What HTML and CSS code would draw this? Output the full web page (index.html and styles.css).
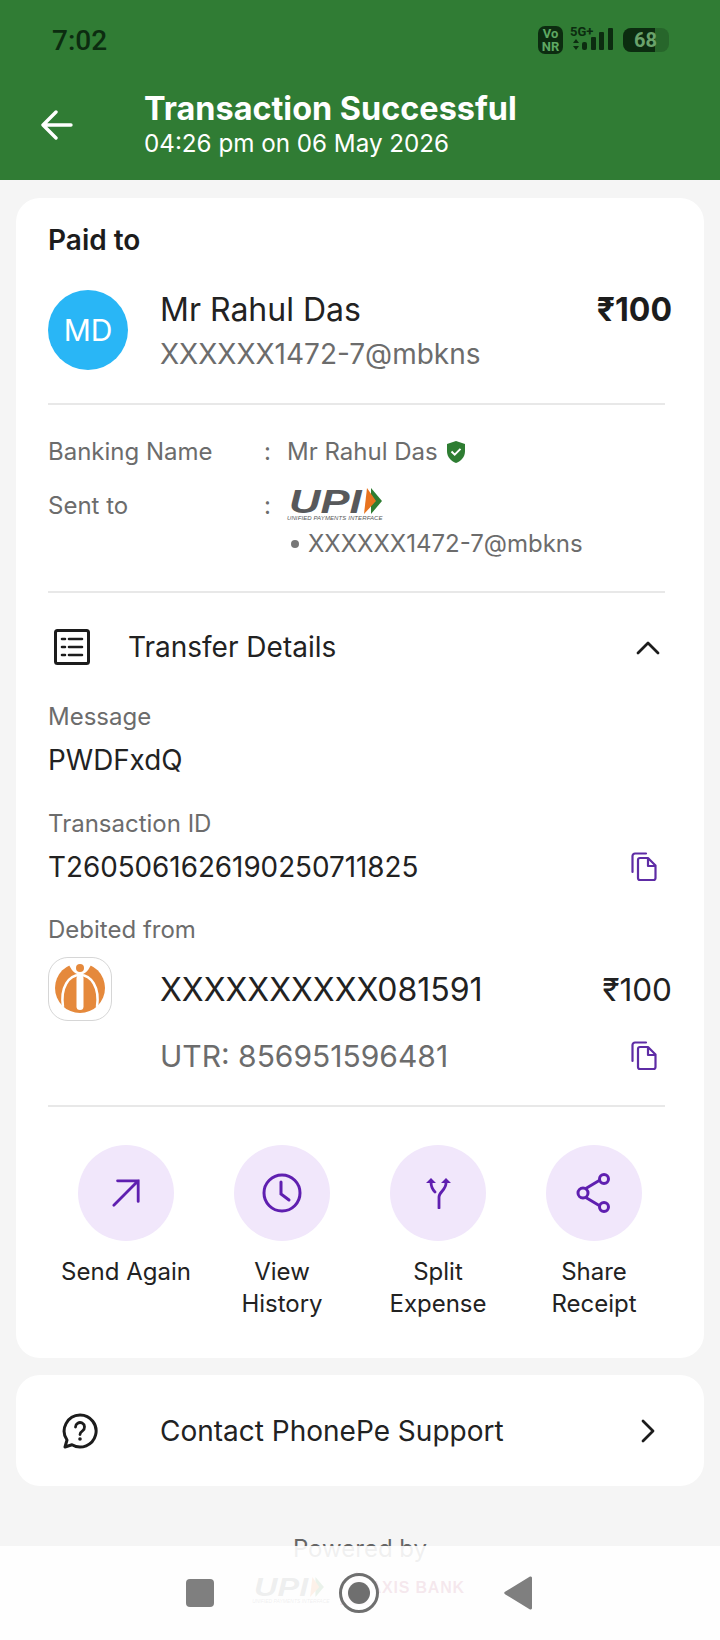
FILE: index.html
```html
<!DOCTYPE html>
<html>
	<head>
		<meta charset="utf-8">
		<title>Transaction Successful</title>
		<link rel="stylesheet" href="styles.css">
	</head>
	<body>
		<div class="screen">
			<div class="header">
				<div class="statusBar">
					<div class="time">7:02</div>
					<div class="statusIcons">
						<div class="vonr">Vo<br>NR</div>
						<div class="signal">
							<div class="fiveG">5G+</div>
							<svg width="43" height="22" viewBox="0 0 43 22"><path d="M6 11l3 4H3zM6 22l3-4H3z" fill="#0c2c10"/><rect x="12" y="14" width="5" height="8" rx="2" fill="#0c2c10"/><rect x="21" y="9" width="5" height="13" rx="1" fill="#0c2c10"/><rect x="29" y="4" width="5" height="18" rx="1" fill="#0c2c10"/><rect x="38" y="0" width="5" height="22" rx="1" fill="#0c2c10"/></svg>
						</div>
						<div class="battery">
							<div class="batteryFill"></div>
							<div class="batteryText">68</div>
						</div>
					</div>
				</div>
				<div class="titleRow">
					<svg class="backIcon" width="32" height="30" viewBox="0 0 32 30"><path d="M30 15H3M15 2L2 15l13 13" fill="none" stroke="#fff" stroke-width="3.4" stroke-linecap="round" stroke-linejoin="round"/></svg>
					<div>
						<div class="title">Transaction Successful</div>
						<div class="subtitle">04:26 pm on 06 May 2026</div>
					</div>
				</div>
			</div>

			<div class="card mainCard">
				<div class="paidTo">Paid to</div>
				<div class="payee">
					<div class="avatar">MD</div>
					<div class="payeeText">
						<div class="payeeName">Mr Rahul Das</div>
						<div class="payeeId">XXXXXX1472-7@mbkns</div>
					</div>
					<div class="payeeAmount">₹100</div>
				</div>
				<div class="divider dividerPayee"></div>

				<div class="infoRow">
					<div class="infoLabel">Banking Name</div>
					<div class="infoColon">:</div>
					<div class="infoValue">Mr Rahul Das
						<svg class="shield" width="20" height="22" viewBox="0 0 20 22"><path d="M10 0l9 3v7c0 6-4 10-9 12C5 20 1 16 1 10V3z" fill="#2e7d32"/><path d="M5.5 10.5l3.2 3.2 5.8-5.8" fill="none" stroke="#fff" stroke-width="2"/></svg>
					</div>
				</div>
				<div class="infoRow sentRow">
					<div class="infoLabel">Sent to</div>
					<div class="infoColon">:</div>
					<div>
						<div class="upiLogo">
							<div class="upiTop">
								<div class="upiLetters">UPI</div>
								<svg width="18" height="26" viewBox="0 0 18 26"><polygon points="7,0 18,13 7,26" fill="#2e7d32"/><polygon points="3,0 12,13 0,26" fill="#e8731f"/></svg>
							</div>
							<div class="upiCaption">UNIFIED PAYMENTS INTERFACE</div>
						</div>
						<div class="sentId"><span class="bullet"></span>XXXXXX1472-7@mbkns</div>
					</div>
				</div>
				<div class="divider dividerSent"></div>

				<div class="transferHead">
					<svg class="listIcon" width="36" height="36" viewBox="0 0 36 36"><rect x="1.5" y="1.5" width="33" height="33" rx="2" fill="none" stroke="#1c1c1c" stroke-width="3"/><path d="M8 10h3M8 18h3M8 26h3M15 10h13M15 18h13M15 26h13" stroke="#1c1c1c" stroke-width="2.6" stroke-linecap="round"/></svg>
					<div class="transferTitle">Transfer Details</div>
					<svg class="chevron" width="26" height="16" viewBox="0 0 26 16"><path d="M3 14L13 4l10 10" fill="none" stroke="#1c1c1c" stroke-width="2.8" stroke-linecap="round" stroke-linejoin="round"/></svg>
				</div>

				<div class="detail detailMessage">
					<div class="detailLabel">Message</div>
					<div class="detailValue">PWDFxdQ</div>
				</div>
				<div class="detail">
					<div class="detailLabel">Transaction ID</div>
					<div class="detailRow">
						<div class="detailValue">T2605061626190250711825</div>
						<svg class="copyIcon copyTx" width="26" height="30" viewBox="0 0 26 30"><path d="M1.5 20V4a2.5 2.5 0 0 1 2.5-2.500h11" fill="none" stroke="#5e2ca5" stroke-width="2.2" stroke-linecap="round"/><path d="M7 8a2 2 0 0 1 2-2h8l7.500 7.500V26a2 2 0 0 1-2 2H9a2 2 0 0 1-2-2zM17 6v8h7.500" fill="none" stroke="#5e2ca5" stroke-width="2.200" stroke-linejoin="round"/></svg>
					</div>
				</div>
				<div class="detail detailBank">
					<div class="detailLabel">Debited from</div>
				</div>
				<div class="bankRow">
					<div class="bankLogo">
						<svg width="62" height="62" viewBox="1 1 62 62">
							<circle cx="32" cy="31" r="25" fill="#e5893c"/>
							<path d="M18 0h28l-3 8c-2 4-5 9-11 10-6-1-9-6-11-10z" fill="#fff"/>
							<path d="M15 50c-3-20 6-32 17-32s20 12 17 32" fill="none" stroke="#fff" stroke-width="2.500"/>
							<rect x="28.500" y="18" width="7" height="35" rx="3.500" fill="#fff"/>
							<circle cx="32" cy="11" r="4" fill="#e5893c"/>
						</svg>
					</div>
					<div class="bankText">
						<div class="bankLine">
							<div class="bankAccount">XXXXXXXXXX081591</div>
							<div class="bankAmount">₹100</div>
						</div>
						<div class="bankLine utrLine">
							<div class="utr">UTR: 856951596481</div>
							<svg class="copyIcon" width="26" height="30" viewBox="0 0 26 30"><path d="M1.5 20V4a2.5 2.5 0 0 1 2.5-2.500h11" fill="none" stroke="#5e2ca5" stroke-width="2.2" stroke-linecap="round"/><path d="M7 8a2 2 0 0 1 2-2h8l7.500 7.500V26a2 2 0 0 1-2 2H9a2 2 0 0 1-2-2zM17 6v8h7.500" fill="none" stroke="#5e2ca5" stroke-width="2.200" stroke-linejoin="round"/></svg>
						</div>
					</div>
				</div>
				<div class="divider dividerBank"></div>

				<div class="actions">
					<div class="action">
						<div class="actionCircle">
							<svg width="30" height="30" viewBox="0 0 32 32"><path d="M3 29L29 3M7 3h22v22" fill="none" stroke="#5f1fb0" stroke-width="3" stroke-linecap="round"/></svg>
						</div>
						<div class="actionLabel">Send Again</div>
					</div>
					<div class="action">
						<div class="actionCircle">
							<svg width="40" height="40" viewBox="0 0 40 40"><circle cx="20" cy="20" r="18" fill="none" stroke="#5f1fb0" stroke-width="3"/><path d="M19 9v12l8 6" fill="none" stroke="#5f1fb0" stroke-width="3" stroke-linecap="round"/></svg>
						</div>
						<div class="actionLabel">View History</div>
					</div>
					<div class="action">
						<div class="actionCircle">
							<svg width="26" height="32" viewBox="0 0 26 32"><path d="M14 31V20c0-5 7-7 7-14M6 5c0 5 1 7 4 10" fill="none" stroke="#5f1fb0" stroke-width="2.800" stroke-linecap="round"/><path d="M1 6l5-5 5 5zM16 6l5-5 5 5z" fill="#5f1fb0"/></svg>
						</div>
						<div class="actionLabel">Split Expense</div>
					</div>
					<div class="action">
						<div class="actionCircle">
							<svg width="36" height="40" viewBox="0 0 36 40"><path d="M9 16L24 7M9 24l15 9" fill="none" stroke="#5f1fb0" stroke-width="3"/><circle cx="7" cy="20" r="5" fill="none" stroke="#5f1fb0" stroke-width="3"/><circle cx="28" cy="6" r="4.500" fill="none" stroke="#5f1fb0" stroke-width="3"/><circle cx="28" cy="34" r="4.500" fill="none" stroke="#5f1fb0" stroke-width="3"/></svg>
						</div>
						<div class="actionLabel">Share Receipt</div>
					</div>
				</div>
			</div>

			<div class="card supportCard">
				<svg class="helpIcon" width="36" height="36" viewBox="0 0 36 36"><path d="M18 2a16 16 0 1 1-8 29.800L3 34l2-7A16 16 0 0 1 18 2z" fill="none" stroke="#1c1c1c" stroke-width="3" stroke-linejoin="round"/><path d="M13.500 14a4.500 4.500 0 1 1 7 3.800c-1.500 1-2.500 1.800-2.500 3.700" fill="none" stroke="#1c1c1c" stroke-width="2.800" stroke-linecap="round"/><circle cx="18" cy="26" r="1.800" fill="#1c1c1c"/></svg>
				<div class="supportText">Contact PhonePe Support</div>
				<svg class="chevronRight" width="16" height="26" viewBox="0 0 16 26"><path d="M3 3l10 10L3 23" fill="none" stroke="#1c1c1c" stroke-width="2.800" stroke-linecap="round" stroke-linejoin="round"/></svg>
			</div>

			<div class="footer">
				<div class="poweredBy">Powered by</div>
				<div class="partners">
					<div class="upiLogo upiSmall">
						<div class="upiTop">
							<div class="upiLetters">UPI</div>
							<svg width="14" height="20" viewBox="0 0 18 26"><polygon points="7,0 18,13 7,26" fill="#2e7d32"/><polygon points="3,0 12,13 0,26" fill="#e8731f"/></svg>
						</div>
						<div class="upiCaption">UNIFIED PAYMENTS INTERFACE</div>
					</div>
					<div class="axis">
						<svg width="30" height="34" viewBox="0 0 30 34"><polygon points="17,0 30,34 0,34" fill="#97144d"/></svg>
						<div class="axisText">AXIS BANK</div>
					</div>
				</div>
			</div>

			<div class="navBar">
				<div class="navSquare"></div>
				<div class="navHome"><div class="navHomeDot"></div></div>
				<svg width="28" height="34" viewBox="0 0 28 34"><path d="M26 0.500a1.500 1.500 0 0 1 2 1.500v30a1.500 1.500 0 0 1-2 1.500L1 18.200a1.500 1.500 0 0 1 0-2.400z" fill="#7f7f7f"/></svg>
			</div>
		</div>
	</body>
</html>
```

FILE: styles.css
```css
html, body {
	margin: 0;
	padding: 0;
	background: #f5f5f5;
}

.screen {
	position: relative;
	width: 720px;
	height: 1640px;
	overflow: hidden;
	font-family: Inter, "Liberation Sans", sans-serif;
	color: #1c1c1c;
}

.header {
	height: 180px;
	background: #307c34;
	color: #fff;
}

.statusBar {
	display: flex;
	justify-content: space-between;
	align-items: center;
	height: 80px;
	padding: 0 51px 0 52px;
}

.time {
	font-family: Roboto, sans-serif;
	font-size: 28px;
	font-weight: 500;
	color: #0c2c10;
}

.statusIcons {
	display: flex;
	align-items: center;
}

.vonr {
	width: 25px;
	height: 28px;
	margin-right: 7px;
	border-radius: 7px;
	background: #0c2c10;
	color: #5ea862;
	font: bold 13px/13px Roboto, sans-serif;
	text-align: center;
	padding-top: 1px;
	box-sizing: border-box;
}

.signal {
	position: relative;
	width: 43px;
	height: 24px;
	margin: 0 10px 4px 0;
}

.fiveG {
	font: bold 13px/12px Roboto, sans-serif;
	color: #0c2c10;
}

.signal svg {
	position: absolute;
	left: 0;
	bottom: 0;
}

.battery {
	position: relative;
	width: 46px;
	height: 24px;
	border-radius: 8px;
	background: #27662b;
}

.batteryFill {
	width: 32px;
	height: 24px;
	border-radius: 8px 0 0 8px;
	background: #0c2c10;
}

.batteryText {
	position: absolute;
	left: 11px;
	top: 0;
	font: bold 20px/24px Roboto, sans-serif;
	color: #6aa36c;
}

.titleRow {
	display: flex;
	align-items: center;
	height: 88px;
	padding-left: 41px;
}

.backIcon {
	margin-right: 71px;
	margin-top: 1px;
}

.title {
	font-size: 32.4px;
	font-weight: 700;
	line-height: 40px;
}

.subtitle {
	font-size: 24.2px;
	line-height: 30px;
}

.card {
	background: #fff;
	border-radius: 24px;
	margin: 0 16px;
}

.mainCard {
	height: 1160px;
	margin-top: 18px;
	padding: 26px 32px 0;
	box-sizing: border-box;
}

.paidTo {
	font-size: 28px;
	font-weight: 600;
	line-height: 32px;
}

.payee {
	display: flex;
	align-items: flex-start;
	margin-top: 34px;
}

.avatar {
	width: 80px;
	height: 80px;
	border-radius: 50%;
	background: #29b6f6;
	color: #fff;
	font-size: 30px;
	line-height: 80px;
	text-align: center;
	flex: none;
}

.payeeText {
	flex: 1;
	margin-left: 32px;
}

.payeeName {
	font-size: 32px;
	line-height: 39px;
	color: #222;
}

.payeeId {
	font-size: 28px;
	line-height: 38px;
	margin-top: 6px;
	color: #6c6c6c;
}

.payeeAmount {
	font-size: 32px;
	font-weight: 700;
	line-height: 40px;
}

.divider {
	height: 2px;
	background: #e8e8e8;
	margin-right: 7px;
}

.dividerPayee {
	margin-top: 30px;
}

.infoRow {
	display: grid;
	grid-template-columns: 216px 23px 1fr;
	margin-top: 32px;
	font-size: 24px;
	line-height: 30px;
	color: #6c6c6c;
}

.infoValue {
	display: flex;
	align-items: center;
	gap: 8px;
}

.sentRow {
	margin-top: 24px;
}

.upiLogo {
	height: 34px;
	margin-top: -3px;
}

.upiTop {
	display: flex;
	align-items: center;
	height: 26px;
	margin-left: 2px;
}

.upiLetters {
	width: 75px;
	height: 26px;
	font: italic bold 34px/26px "Liberation Sans", sans-serif;
	color: #58595b;
	transform: scaleX(1.28);
	transform-origin: left center;
}

.upiCaption {
	height: 8px;
	font: italic 6px/8px "Liberation Sans", sans-serif;
	letter-spacing: 0.1px;
	color: #58595b;
	white-space: nowrap;
}

.sentId {
	display: flex;
	align-items: center;
	margin-top: 7px;
}

.bullet {
	width: 8px;
	height: 8px;
	border-radius: 50%;
	background: #777;
	margin: 0 9px 0 4px;
}

.dividerSent {
	margin-top: 32px;
}

.transferHead {
	display: flex;
	align-items: center;
	height: 36px;
	margin-top: 36px;
}

.listIcon {
	margin-left: 6px;
	flex: none;
}

.transferTitle {
	flex: 1;
	margin-left: 38px;
	font-size: 28px;
	color: #222;
}

.chevron {
	margin-right: 11px;
}

.detail {
	margin-top: 31px;
}

.detailMessage {
	margin-top: 37px;
}

.detailBank {
	margin-top: 30px;
}

.detailLabel {
	font-size: 24px;
	line-height: 30px;
	color: #6c6c6c;
}

.detailValue {
	font-size: 27.8px;
	line-height: 36px;
	margin-top: 10px;
	color: #222;
}

.detailRow {
	display: flex;
	justify-content: space-between;
	align-items: center;
}

.copyIcon {
	margin-right: 15px;
	flex: none;
}

.copyTx {
	margin-top: 10px;
}

.bankRow {
	display: flex;
	margin-top: 12px;
}

.bankLogo {
	width: 64px;
	height: 64px;
	border: 1px solid #d6d6d6;
	border-radius: 20px;
	box-sizing: border-box;
	flex: none;
}

.bankLogo svg {
	display: block;
}

.bankText {
	flex: 1;
	margin-left: 48px;
}

.bankLine {
	display: flex;
	justify-content: space-between;
	align-items: center;
	height: 64px;
	font-size: 32px;
	color: #222;
}

.bankAmount {
	font-size: 31.5px;
}

.utrLine {
	height: 36px;
	margin-top: 17px;
}

.utr {
	font-size: 30px;
	color: #6c6c6c;
}

.dividerBank {
	margin-top: 31px;
}

.actions {
	display: grid;
	grid-template-columns: repeat(4, 156px);
	margin-top: 38px;
}

.action {
	display: flex;
	flex-direction: column;
	align-items: center;
}

.actionCircle {
	width: 96px;
	height: 96px;
	border-radius: 50%;
	background: #f1e7fb;
	display: flex;
	align-items: center;
	justify-content: center;
}

.actionLabel {
	width: 140px;
	margin-top: 15px;
	font-size: 24px;
	line-height: 32px;
	text-align: center;
	color: #222;
}

.supportCard {
	display: flex;
	align-items: center;
	height: 111px;
	margin-top: 17px;
	padding: 0 32px;
}

.helpIcon {
	margin-left: 14px;
	flex: none;
}

.supportText {
	flex: 1;
	margin-left: 62px;
	font-size: 28px;
	color: #222;
}

.chevronRight {
	margin-right: 16px;
}

.footer {
	margin-top: 48px;
	text-align: center;
}

.poweredBy {
	font-size: 24px;
	line-height: 30px;
	color: #666;
}

.partners {
	display: flex;
	justify-content: center;
	align-items: flex-start;
	gap: 10px;
	margin-top: 13px;
	padding-right: 3px;
}

.upiSmall {
	margin-top: 0;
	text-align: left;
}

.upiSmall .upiTop {
	height: 20px;
}

.upiSmall .upiLetters {
	width: 56px;
	height: 20px;
	font-size: 26px;
	line-height: 20px;
	transform: scaleX(1.25);
}

.upiSmall .upiCaption {
	font-size: 5px;
	letter-spacing: 0;
}

.axis {
	display: flex;
	align-items: center;
	margin-top: -6px;
}

.axisText {
	font: bold 16px "Liberation Sans", sans-serif;
	letter-spacing: 0.8px;
	color: #97144d;
}

.navBar {
	position: absolute;
	left: 0;
	right: 0;
	bottom: 0;
	height: 94px;
	background: rgba(255, 255, 255, 0.9);
	display: flex;
	align-items: center;
	justify-content: space-between;
	padding: 0 188px 0 186px;
	box-sizing: border-box;
}

.navSquare {
	width: 28px;
	height: 28px;
	border-radius: 4px;
	background: #7f7f7f;
}

.navHome {
	width: 40px;
	height: 40px;
	border-radius: 50%;
	border: 3px solid #6f6f6f;
	box-sizing: border-box;
	display: flex;
	align-items: center;
	justify-content: center;
	background: rgba(255, 255, 255, 0.8);
}

.navHomeDot {
	width: 22px;
	height: 22px;
	border-radius: 50%;
	background: #6f6f6f;
}
```
